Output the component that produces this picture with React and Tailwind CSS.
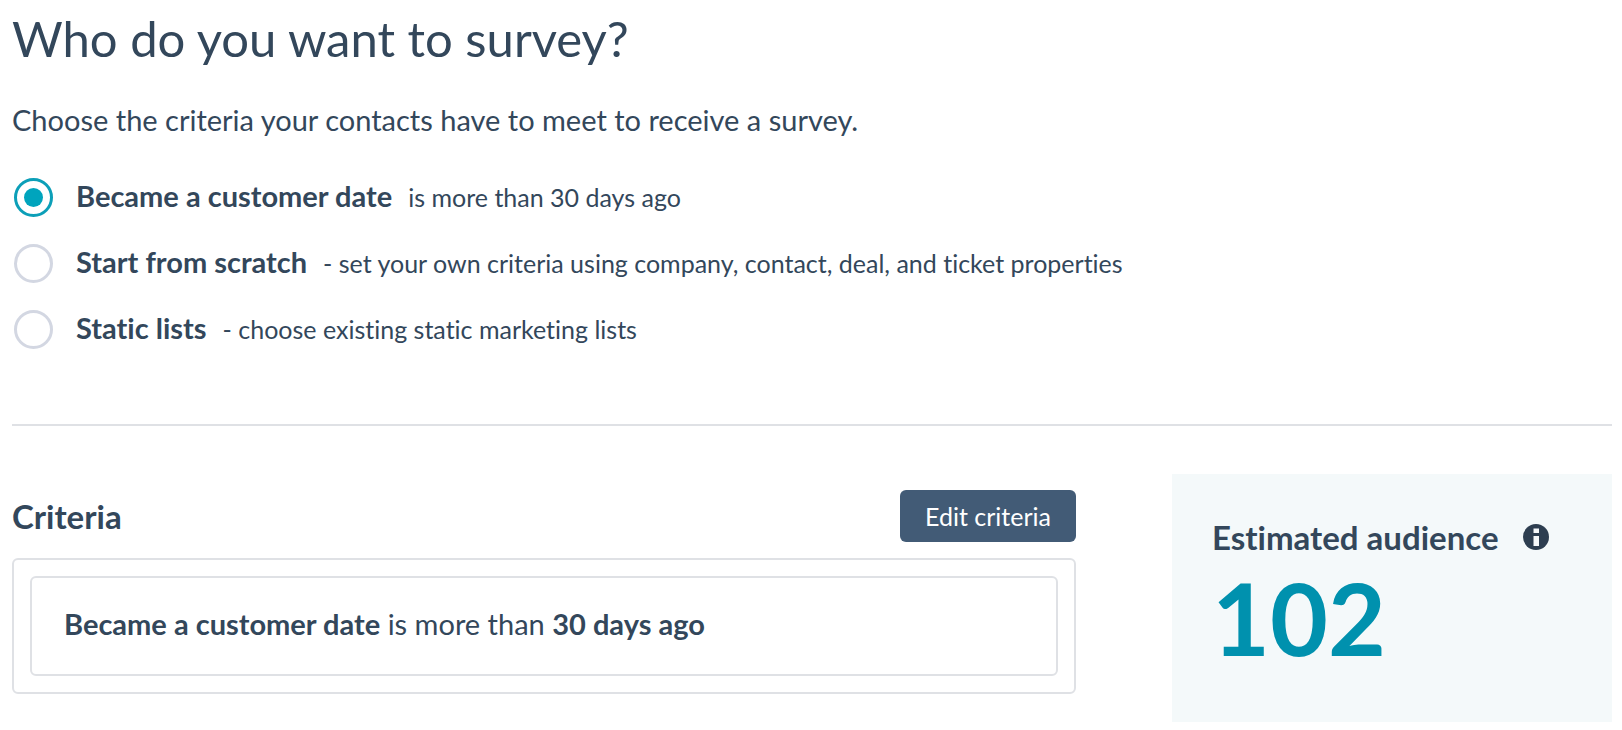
import { useState } from "react";

// Audience options
const options = [
    {
        id: "customer-date",
        title: "Became a customer date",
        description: "is more than 30 days ago",
    },
    {
        id: "scratch",
        title: "Start from scratch",
        description:
            "- set your own criteria using company, contact, deal, and ticket properties",
    },
    {
        id: "static-lists",
        title: "Static lists",
        description: "- choose existing static marketing lists",
    },
];

const InfoIcon = () => (
    <svg viewBox="0 0 26 26" className="size-[26px]" aria-hidden="true">
        <circle cx="13" cy="13" r="13" fill="#2d3e50" />
        <path
            d="M10.5 4.5h5.5v4.5h-5.5zM10.5 12h5.5v10h-5.5z"
            fill="#f5f8fa"
        />
    </svg>
);

const App = () => {
    const [selected, setSelected] = useState("customer-date");

    return (
        <main className="pl-3 pr-2.5 pt-2 pb-2 font-[Lato,sans-serif] text-[#33475b] [font-variant-ligatures:none]">
            <h1 className="text-[49px] leading-[60px] font-normal">
                Who do you want to survey?
            </h1>
            <p className="mt-8 text-[29px] leading-10">
                Choose the criteria your contacts have to meet to receive a
                survey.
            </p>

            <fieldset className="mt-[38px] ml-0.5 flex flex-col gap-[27px]">
                {options.map((option) => (
                    <label
                        key={option.id}
                        htmlFor={option.id}
                        className="flex h-[39px] items-start"
                    >
                        <input
                            type="radio"
                            id={option.id}
                            name="audience"
                            checked={selected === option.id}
                            onChange={() => setSelected(option.id)}
                            className="grid size-[39px] shrink-0 appearance-none place-content-center rounded-full border-3 border-[#d3d7e2] before:size-[19px] before:rounded-full checked:border-[#0c9fb8] checked:before:bg-[#00a4bd]"
                        />
                        <span className="ml-[23px] flex items-baseline gap-4">
                            <span className="text-[29px] leading-9 font-bold">
                                {option.title}
                            </span>
                            <span className="text-[25px] leading-9">
                                {option.description}
                            </span>
                        </span>
                    </label>
                ))}
            </fieldset>

            <hr className="mt-[75px] border-t-2 border-[#dfe1e5]" />

            <div className="mt-12 flex items-start gap-24">
                <section className="min-w-0 flex-1 pt-4">
                    <div className="flex items-center justify-between">
                        <h2 className="text-[33px] leading-10 font-bold">
                            Criteria
                        </h2>
                        <button
                            type="button"
                            className="h-[52px] rounded-md bg-[#425b76] px-[25px] text-[25px] leading-9 text-white"
                        >
                            Edit criteria
                        </button>
                    </div>
                    <div className="mt-4 rounded-md border-2 border-[#dfe1e5] p-4">
                        <p className="rounded-md border-2 border-[#dfe1e5] px-8 pt-7 pb-8 text-[29px] leading-9">
                            <b>Became a customer date</b> is more than{" "}
                            <b>30 days ago</b>
                        </p>
                    </div>
                </section>

                <aside className="h-62 w-[440px] bg-[#f4f9fa] px-10 pt-[43px]">
                    <div className="flex items-center gap-6">
                        <h2 className="text-[33px] leading-10 font-bold">
                            Estimated audience
                        </h2>
                        <button type="button" aria-label="About this estimate">
                            <InfoIcon />
                        </button>
                    </div>
                    <p className="text-[100px] leading-[120px] font-bold text-[#0091ae]">
                        102
                    </p>
                </aside>
            </div>
        </main>
    );
};

export default App;
